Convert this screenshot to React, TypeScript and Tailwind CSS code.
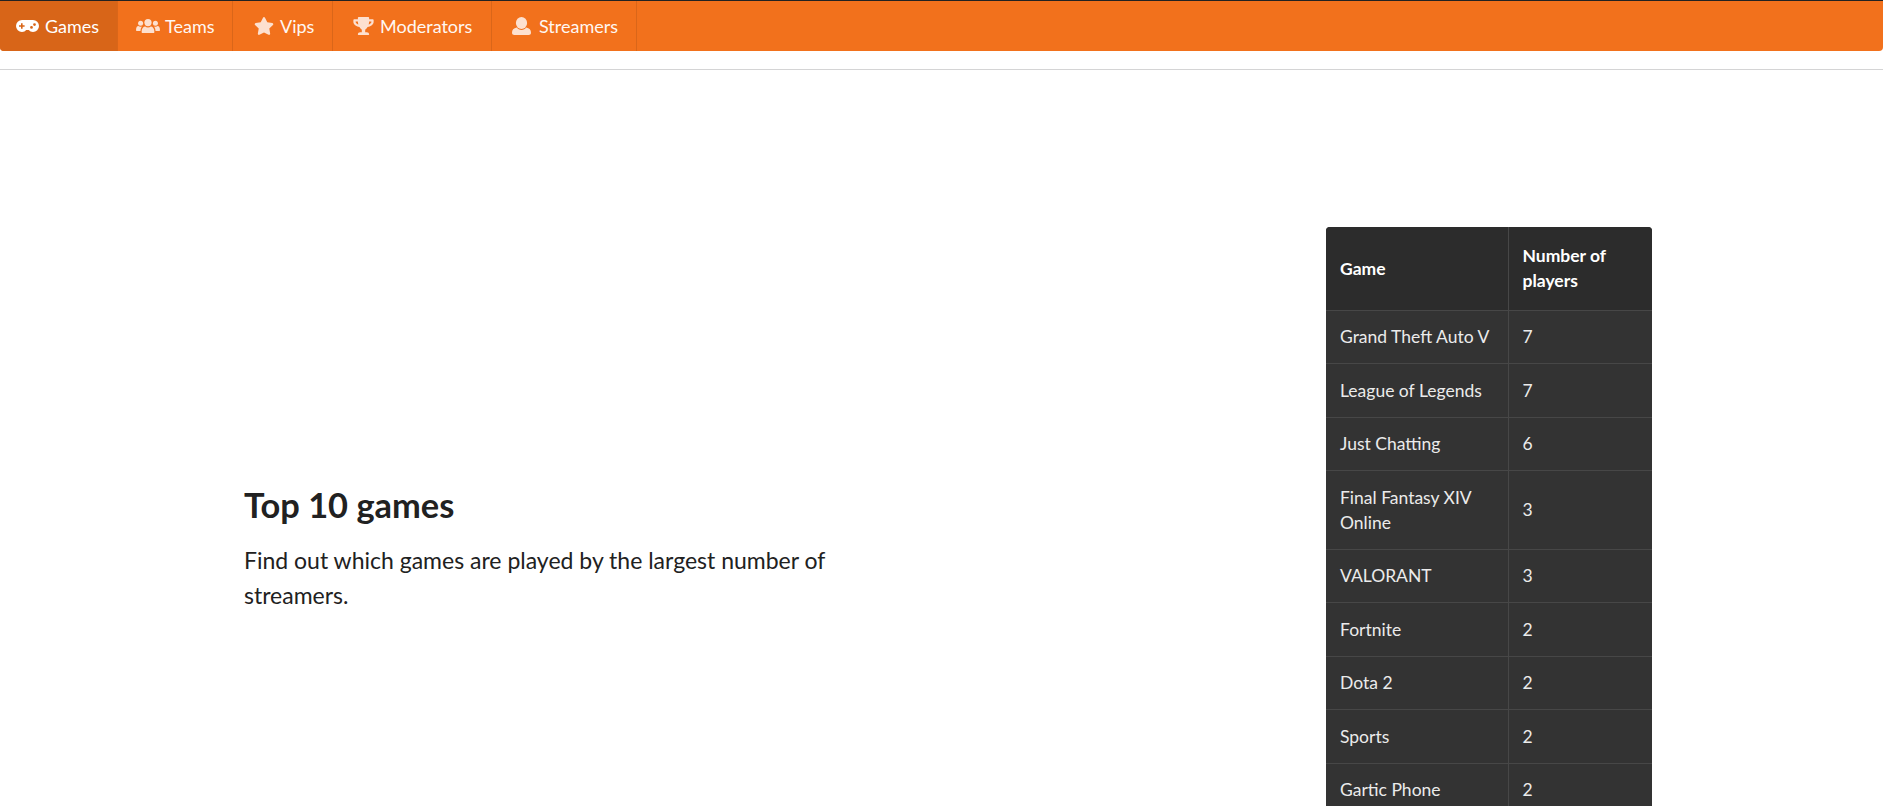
import type { ComponentType } from 'react';
import { FaStar, FaTrophy } from 'react-icons/fa';

// capsule pad with a cut-out cross and two buttons
function GamepadIcon({ className }: { className?: string }) {
  return (
    <svg viewBox="0 0 23 12" fill="currentColor" fillRule="evenodd" className={className}>
      <path d="M6 0h11a6 6 0 0 1 0 12c-1.800 0-3.200-.8-4.200-2h-2.600c-1 1.200-2.400 2-4.200 2A6 6 0 0 1 6 0zM5 3.200v2H3v1.600h2v2h1.600v-2h2V5.200h-2v-2zM15.500 6a1.400 1.400 0 1 0 0 2.800 1.400 1.400 0 0 0 0-2.800zM18.500 3.200a1.400 1.400 0 1 0 0 2.800 1.400 1.400 0 0 0 0-2.800z" />
    </svg>
  );
}

// the old font-awesome "users" shape, chunkier than the one in react-icons
function TeamIcon({ className }: { className?: string }) {
  return (
    <svg viewBox="0 0 24 14" fill="currentColor" className={className}>
      <circle cx="12" cy="3.6" r="3.6" />
      <path d="M6.6 14c-.6 0-1-.4-1-1 0-3.400 1.700-5.400 3.600-5.400.7.600 1.700 1 2.800 1s2.100-.4 2.800-1c1.900 0 3.600 2 3.600 5.400 0 .6-.4 1-1 1z" />
      <circle cx="4.600" cy="4.200" r="2.500" />
      <circle cx="19.400" cy="4.200" r="2.500" />
      <path d="M4.500 12H.8c-.5 0-.8-.3-.8-.8 0-2.600 1-4.200 2.400-4.200.6.400 1.300.7 2.100.7.500 0 1-.1 1.500-.3-.9 1.100-1.500 2.700-1.500 4.600z" />
      <path d="M19.500 12h3.700c.5 0 .8-.3.8-.8 0-2.600-1-4.200-2.400-4.200-.6.400-1.300.7-2.100.7-.5 0-1-.1-1.500-.3.900 1.100 1.500 2.700 1.500 4.600z" />
    </svg>
  );
}

function UserIcon({ className }: { className?: string }) {
  return (
    <svg viewBox="0 0 19 18" fill="currentColor" className={className}>
      <ellipse cx="9.500" cy="6" rx="5.600" ry="6" />
      <path d="M0 15.800c0-3 1.500-4.600 4.800-5.300 1 1.500 2.800 2.400 4.700 2.400s3.700-.9 4.700-2.400c3.300.7 4.800 2.300 4.800 5.300 0 1.400-1 2.200-2.300 2.200H2.300C1 18 0 17.200 0 15.800z" />
    </svg>
  );
}

type NavItem = {
  label: string;
  icon: ComponentType<{ className?: string }>;
  iconSize: string;
  width: string;
  active?: boolean;
};

const navItems: NavItem[] = [
  { label: 'Games', icon: GamepadIcon, iconSize: 'h-[12px] w-[23px]', width: 'w-[118px]', active: true },
  { label: 'Teams', icon: TeamIcon, iconSize: 'h-[14px] w-[24px]', width: 'w-[115px]' },
  { label: 'Vips', icon: FaStar, iconSize: 'ml-[2px] h-[18px] w-[20px]', width: 'w-[100px]' },
  { label: 'Moderators', icon: FaTrophy, iconSize: 'ml-[2px] h-[18px] w-[21px]', width: 'w-[159px]' },
  { label: 'Streamers', icon: UserIcon, iconSize: 'h-[18px] w-[19px]', width: 'w-[145px]' },
];

const games = [
  { name: 'Grand Theft Auto V', players: 7 },
  { name: 'League of Legends', players: 7 },
  { name: 'Just Chatting', players: 6 },
  { name: 'Final Fantasy XIV Online', players: 3 },
  { name: 'VALORANT', players: 3 },
  { name: 'Fortnite', players: 2 },
  { name: 'Dota 2', players: 2 },
  { name: 'Sports', players: 2 },
  { name: 'Gartic Phone', players: 2 },
];

export default function App() {
  return (
    <div className="h-screen overflow-hidden bg-white font-['Lato',sans-serif] text-[#212121]">
      <header className="h-[70px] border-b border-[#d4d4d5]">
        <nav className="flex h-[51px] rounded-b-[4px] border-t border-[#222] bg-[#f2711c]">
          {navItems.map(item => {
            const Icon = item.icon;
            return (
              <a
                key={item.label}
                className={`flex items-center gap-[6px] border-r border-[#da6619] text-[18px] ${item.width} ${item.active ? 'rounded-bl-[4px] bg-[#d86518] pl-[16px] text-white' : 'pl-[18px] text-[#fff7f2]'}`}
              >
                <span className={`flex w-[23px] justify-center ${item.active ? '' : 'text-[#fde0cf]'}`}>
                  <Icon className={`shrink-0 ${item.iconSize}`} />
                </span>
                {item.label}
              </a>
            );
          })}
        </nav>
      </header>

      <main className="flex items-center justify-between pl-[244px] pr-[231px] pt-[157px]">
        <section className="w-[620px]">
          <h2 className="text-[34.400px] leading-[42px] font-bold">Top 10 games</h2>
          <p className="mt-[17px] text-[23px] leading-[34.500px]">
            Find out which games are played by the largest number of streamers.
          </p>
        </section>

        <div className="w-[326px] shrink-0 overflow-hidden rounded-[4px] bg-[#333] text-[17.500px] leading-[25px] text-[#ebebeb]">
          <table className="w-full table-fixed border-collapse">
            <thead className="bg-[#2c2c2c] text-white">
              <tr className="h-[83px]">
                <th className="w-[182px] border-r border-[#474747] px-[14px] text-left font-bold">Game</th>
                <th className="px-[14px] text-left font-bold">Number of players</th>
              </tr>
            </thead>
            <tbody>
              {games.map(game => (
                <tr key={game.name} className="border-t border-[#474747]">
                  <td className="border-r border-[#474747] px-[14px] py-[13.750px]">{game.name}</td>
                  <td className="px-[14px] py-[13.750px]">{game.players}</td>
                </tr>
              ))}
              {/* tenth row sits below the fold, only its height matters */}
              <tr className="h-[53px] border-t border-[#474747]">
                <td className="border-r border-[#474747]" />
                <td />
              </tr>
            </tbody>
          </table>
        </div>
      </main>
    </div>
  );
}
